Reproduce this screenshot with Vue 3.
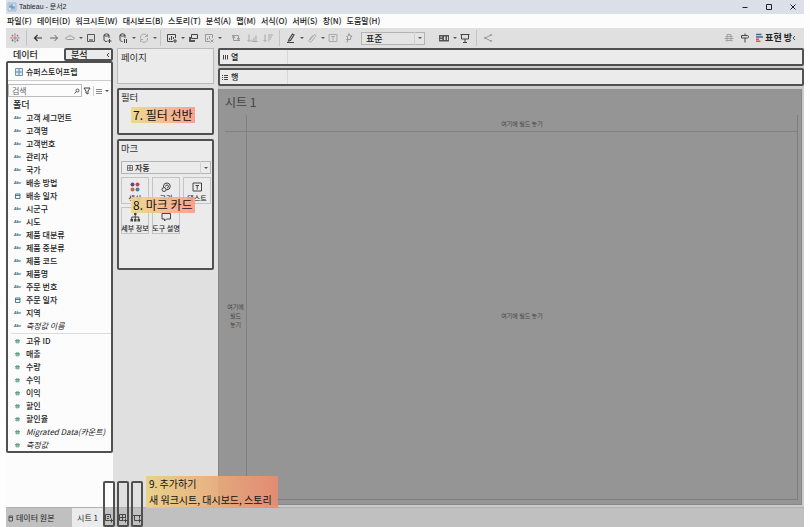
<script setup>
import { ref } from 'vue'

const menus = ['파일(F)', '데이터(D)', '워크시트(W)', '대시보드(B)', '스토리(T)', '분석(A)', '맵(M)', '서식(O)', '서버(S)', '창(N)', '도움말(H)']

const dark = '#444'
const pale = '#999'
const line = (d, stroke = dark, w = 1) => ({ d, stroke, fill: 'none', w })
const solid = (d, fill = dark) => ({ d, stroke: 'none', fill, w: 0 })

const caret = { kind: 'caret' }
const sep = { kind: 'sep' }
const space = { kind: 'space' }
const icon = (label, ...parts) => ({ kind: 'icon', label, parts })

const tools = [
  icon('시작 페이지', line('M6 4v4M4 6h4', '#d9773d'), line('M6 1.500v2M6 8.500v2M1.500 6h2M8.500 6h2', '#59879b'), line('M3.500 2.700v2M2.500 3.700h2M8.500 2.700v2M7.500 3.700h2', '#c27a8a'), line('M3.500 7.300v2M2.500 8.300h2M8.500 7.300v2M7.500 8.300h2', '#6f6f9e')),
  sep,
  icon('실행 취소', line('M10 6H2.5M5.5 3l-3 3 3 3', '#333', 1.2)),
  icon('다시 실행', line('M2 6h7.5M6.5 3l3 3-3 3', '#666')),
  icon('바꾸기', line('M3.5 7.500C1 7.500 1 5 3.5 5 4 3.500 8 3.500 8.5 5 11 5 11 7.500 8.5 7.500M3.5 7.500h5', '#999')),
  caret,
  icon('저장', line('M2.5 2.5h7v7h-7z', '#555'), solid('M4 7h4v2.5H4z', '#888')),
  icon('새 데이터 원본', line('M3 3v5c0 1 2 1.5 3 1.5M3 3c0-1.5 5-1.5 5 0S3 4.500 3 3M8 3v3M8.500 7v4M6.500 9h4')),
  icon('자동 업데이트', line('M3 3v5c0 1 1.500 1.500 2.500 1.500M3 3c0-1.500 5-1.500 5 0S3 4.500 3 3M8 3v3M7.500 7v4M9.500 7v4')),
  caret,
  icon('새로 고침', line('M2.500 6.500a3.500 3.500 0 0 1 6.500-2.500M9.500 2v2.500H7M9.500 6a3.500 3.500 0 0 1-6.500 2.500M2.500 10V7.500H5', '#aaa')),
  caret,
  sep,
  icon('새 워크시트', line('M7 9.500H1.500v-7h8V6M3.500 8V6M5.500 8V4M7.500 7V5M9 7v4M7 9h4')),
  caret,
  icon('복제', line('M4.500 2.500h6v4h-6z', '#444'), solid('M2 5h2v3h4v2H2z', '#555')),
  icon('시트 지우기', line('M7 9.500H2.500v-7h7V6M4.500 8V6M6.500 7V4M7.500 7.500l3 3M10.500 7.500l-3 3', '#999')),
  caret,
  space,
  icon('행과 열 바꾸기', line('M2 3.500h6.500v4M7 6l1.500 2L10 6M10 8.500H3.500v-4M2 6l1.500-2L5 6', pale)),
  icon('오름차순 정렬', line('M3 2.500v7M1.500 8L3 9.500 4.500 8M6 9V7.500M8 9V5.500M10 9V3.500M5.500 9.500h6', '#aaa')),
  icon('내림차순 정렬', line('M3 2.500v7M1.500 8L3 9.500 4.500 8M6 3h5M6 5h4M6 7h3M6 9h1.500', '#aaa')),
  sep,
  icon('하이라이트', line('M4 7.500L7.500 2l1.500 1-3.500 5.500-2 .500zM2 10.500h7', '#444', 1.200)),
  caret,
  icon('그룹', line('M4 8l4-5c1-1 2.500 0 1.500 1.500l-4 5c-1.500 1.500-3.500 0-2-2l3-4', '#aaa')),
  caret,
  icon('레이블 표시', line('M2 2.500h8v7H2zM4 4.500h4M6 4.500v4', '#aaa')),
  icon('고정', line('M6 1.500l1 2.500h2L7.500 6v1.500h-4L5 6 3.500 4.500 5 4zM5 7.500l-1 3', pale)),
]

const tools2 = [
  icon('카드 표시', solid('M1 3h10v6.500H1z', '#555'), solid('M2.200 4.500h2v1h-2zM2.200 7h2v1h-2zM6 4.500h1.500V8H6zM9 4.500h1V8H9z', '#ddd')),
  caret,
  icon('프레젠테이션', line('M1.500 2.500h9M2.500 2.500v4.500h7V2.500M6 7v3M4 10.500h4', '#444')),
  sep,
  icon('공유', line('M3 6l6-3M3 6l6 3M2.500 5.500h1v1h-1zM8.500 2.500h1v1h-1zM8.500 8.500h1v1h-1z', '#999')),
]

const tools3 = [
  icon('데이터 가이드', line('M2.500 4.500h7M1.500 6.500h9M2.500 8.500h7M4 2.500h4M4 2.500v7M8 2.500v7', '#a0a0a0')),
  icon('안내', line('M2.500 3.500h6l1.500 1.250-1.500 1.250h-6zM6 1.500v2M6 6v4.500', '#444')),
]

const dimensions = [
  ['고객 세그먼트', 'Abc'], ['고객명', 'Abc'], ['고객번호', 'Abc'], ['관리자', 'Abc'], ['국가', 'Abc'],
  ['배송 방법', 'Abc'], ['배송 일자', 'date'], ['시군구', 'Abc'], ['시도', 'Abc'], ['제품 대분류', 'Abc'],
  ['제품 중분류', 'Abc'], ['제품 코드', 'Abc'], ['제품명', 'Abc'], ['주문 번호', 'Abc'], ['주문 일자', 'date'],
  ['지역', 'Abc'], ['측정값 이름', 'Abc', true],
]
const measures = [
  ['고유 ID'], ['매출'], ['수량'], ['수익'], ['이익'], ['할인'], ['할인율'],
  ['Migrated Data(카운트)', true], ['측정값', true],
]

const marks = [
  { label: '색상', parts: [solid('M1.500 3.500a2 2 0 1 0 4 0 2 2 0 1 0-4 0', '#5a4a78'), solid('M6.500 3.500a2 2 0 1 0 4 0 2 2 0 1 0-4 0', '#c0445a'), solid('M1.500 8.500a2 2 0 1 0 4 0 2 2 0 1 0-4 0', '#c8674a'), solid('M6.500 8.500a2 2 0 1 0 4 0 2 2 0 1 0-4 0', '#4a7f96')] },
  { label: '크기', parts: [line('M3.500 6V5a3.400 3.400 0 1 1 3.400 3.800H6M2 8.500a2 2 0 1 0 4 0 2 2 0 1 0-4 0M5.500 5.500a1.500 1.500 0 1 1 1.500 1.500')] },
  { label: '텍스트', parts: [line('M2 2h8.500v8H2zM4.500 4.500h3.500M6.250 4.500v4')] },
  { label: '세부 정보', parts: [solid('M5 1.500h2.500v2.500H5zM1.500 8H4v2.500H1.500zM5 8h2.500v2.500H5zM8.500 8H11v2.500H8.500z'), line('M6.250 3v5M2.750 8V6h7v2')] },
  { label: '도구 설명', parts: [line('M2 2.500h8.500v5.500H6.500l-2 2V8H2z')] },
]

const newTabs = [
  { label: '새 워크시트', d: 'M6.500 8.500H2.500v-6h5V6M4 4.500h2M4 6.500h2M8.500 6.500v4M6.500 8.500h4' },
  { label: '새 대시보드', d: 'M6.500 8.500H2.500v-6h6V6M2.500 5.500h6M5.500 2.500v6M8.500 6.500v4M6.500 8.500h4' },
  { label: '새 스토리', d: 'M6.500 8.500H3.500v-5h5V6M2 3.500h2M8 3.500h2M8.500 6.500v4M6.500 8.500h4' },
]

const search = ref('')
const fit = ref('표준')
const markType = ref('자동')
</script>

<template>
  <div class="app">
    <header class="titlebar">
      <svg class="ic" viewBox="0 0 12 12"><path d="M2 2h8v8H2z" fill="#cfe0ee" stroke="#9db8cf" /><path d="M6 3v6M3 6h6M4 3.500v2M8 6.500v2" stroke="#4f87b0" fill="none" /></svg>
      <span class="title">Tableau - 문서2</span>
      <div class="wins">
        <button aria-label="최소화"><svg class="ic" viewBox="0 0 12 12"><path d="M3.500 6.500h5" stroke="#222" /></svg></button>
        <button aria-label="최대화"><svg class="ic" viewBox="0 0 12 12"><path d="M3.500 3.500h5v5h-5z" stroke="#222" fill="none" /></svg></button>
        <button aria-label="닫기"><svg class="ic" viewBox="0 0 12 12"><path d="M3.500 3.500l5 5M8.500 3.500l-5 5" stroke="#222" /></svg></button>
      </div>
    </header>

    <nav class="menubar">
      <button v-for="m in menus" :key="m">{{ m }}</button>
    </nav>

    <div class="toolbar">
      <template v-for="(t, i) in tools" :key="i">
        <button v-if="t.kind === 'icon'" class="tool" :aria-label="t.label">
          <svg class="ic" viewBox="0 0 12 12"><path v-for="(p, j) in t.parts" :key="j" :d="p.d" :fill="p.fill" :stroke="p.stroke" :stroke-width="p.w" /></svg>
        </button>
        <i v-else :class="t.kind"></i>
      </template>
      <div class="pick fit">
        <select v-model="fit" aria-label="맞춤">
          <option>표준</option>
        </select>
        <i class="caret"></i>
      </div>
      <template v-for="(t, i) in tools2" :key="'b' + i">
        <button v-if="t.kind === 'icon'" class="tool" :aria-label="t.label">
          <svg class="ic" viewBox="0 0 12 12"><path v-for="(p, j) in t.parts" :key="j" :d="p.d" :fill="p.fill" :stroke="p.stroke" :stroke-width="p.w" /></svg>
        </button>
        <i v-else :class="t.kind"></i>
      </template>
      <div class="right">
        <button v-for="t in tools3" :key="t.label" class="tool" :aria-label="t.label">
          <svg class="ic" viewBox="0 0 12 12"><path v-for="(p, j) in t.parts" :key="j" :d="p.d" :fill="p.fill" :stroke="p.stroke" :stroke-width="p.w" /></svg>
        </button>
        <button class="showme">
          <svg class="ic" viewBox="0 0 12 12"><path d="M3 2.500h5.500M3 5h7" stroke="#44658f" stroke-width="1.500" /><path d="M3 7.200h3M3 9.200h4.500" stroke="#d0564a" stroke-width="1.500" /></svg>
          표현 방<svg class="cut" viewBox="0 0 4 8"><path d="M3 2L1 4l2 2" stroke="#555" fill="none" /></svg>
        </button>
      </div>
    </div>

    <main class="body">
      <aside class="side">
        <div class="tabs">
          <button class="tab">데이터</button>
          <button class="tab analysis">분석<svg class="cut" viewBox="0 0 4 8"><path d="M3 2L1 4l2 2" stroke="#444" fill="none" /></svg></button>
        </div>
        <div class="pane">
          <button class="source">
            <svg class="ic" viewBox="0 0 12 12"><path d="M2.500 2.500h7v7h-7z" fill="#dfeaf2" stroke="#7396b0" /><path d="M6 2.500v7M2.500 6h7" stroke="#5d8aa8" /></svg>
            슈퍼스토어프렙
          </button>
          <div class="searchrow">
            <div class="box">
              <input v-model="search" type="text" placeholder="검색" aria-label="검색" />
              <svg class="mag" viewBox="0 0 8 8"><path d="M3 3.500a1.500 1.500 0 1 0 3 0 1.500 1.500 0 1 0-3 0M3.500 4.500L1.500 6.500" stroke="#555" fill="none" /></svg>
            </div>
            <button aria-label="필터"><svg class="ic sm" viewBox="0 0 10 10"><path d="M2 2h6L6 5v3L4 7V5z" stroke="#444" fill="none" /></svg></button>
            <button class="view" aria-label="보기"><svg class="ic sm" viewBox="0 0 10 10"><path d="M2 3.500h6M2 5.500h6M2 7.500h6" stroke="#888" /></svg><i class="caret"></i></button>
          </div>
          <h2 class="folder">폴더</h2>
          <ul>
            <li v-for="[name, type, it] in dimensions" :key="name">
              <span v-if="type === 'Abc'" class="abc">Abc</span>
              <svg v-else class="typ" viewBox="0 0 8 8"><path d="M1.500 2h4.500v4.500h-4.500zM1.500 3.500h4.500" stroke="#437a90" fill="none" /></svg>
              <span :class="{ it }">{{ name }}</span>
            </li>
          </ul>
          <ul class="measures">
            <li v-for="[name, it] in measures" :key="name">
              <svg class="typ" viewBox="0 0 8 8"><path d="M2.800 2v4.500M4.200 2v4.500M1 3.500h5M1 5h5" stroke="#4b9679" stroke-width=".800" /></svg>
              <span :class="{ it }">{{ name }}</span>
            </li>
          </ul>
        </div>
      </aside>

      <section class="cards">
        <div class="card pages"><h3>페이지</h3></div>
        <div class="card filters outlined">
          <h3>필터</h3>
          <p class="note">7. 필터 선반</p>
        </div>
        <div class="card marks outlined">
          <h3>마크</h3>
          <div class="pick marktype">
            <svg class="ic sm" viewBox="0 0 10 10"><path d="M2.500 2.500h5v5h-5zM5 2.500v5M2.500 5h5" stroke="#555" fill="none" stroke-width=".800" /></svg>
            <select v-model="markType" aria-label="마크 유형"><option>자동</option></select>
            <i class="caret"></i>
          </div>
          <div class="grid">
            <button v-for="m in marks" :key="m.label">
              <svg class="ic" viewBox="0 0 12 12"><path v-for="(p, j) in m.parts" :key="j" :d="p.d" :fill="p.fill" :stroke="p.stroke" :stroke-width="p.w" /></svg>
              <span>{{ m.label }}</span>
            </button>
          </div>
          <p class="note">8. 마크 카드</p>
        </div>
      </section>

      <section class="work">
        <div class="shelf outlined"><span class="name"><svg class="typ" viewBox="0 0 8 8"><path d="M2.500 2v4.500M4.500 2v4.500M6.500 2v4.500" stroke="#444" /></svg>열</span></div>
        <div class="shelf outlined"><span class="name"><svg class="typ" viewBox="0 0 8 8"><path d="M1 2.500h1M3 2.500h4M1 4.500h1M3 4.500h4M1 6.500h1M3 6.500h4" stroke="#444" /></svg>행</span></div>
        <div class="canvas">
          <h1>시트 1</h1>
          <div class="sheet">
            <div class="corner"></div>
            <div class="drop top">여기에 필드 놓기</div>
            <div class="drop left">여기에<br />필드<br />놓기</div>
            <div class="drop mid">여기에 필드 놓기</div>
          </div>
        </div>
      </section>
    </main>

    <footer class="sheets">
      <button class="src"><svg class="typ" viewBox="0 0 8 8"><path d="M2 2h3.500v5H2zM2 3.500h3.500" stroke="#555" fill="none" /></svg>데이터 원본</button>
      <button class="cur">시트 1</button>
      <div class="adds">
        <button v-for="n in newTabs" :key="n.label" class="add" :aria-label="n.label">
          <svg class="ic" viewBox="0 0 12 12"><path :d="n.d" stroke="#444" fill="none" /></svg>
        </button>
        <p class="note add-note">9. 추가하기<br />새 워크시트, 대시보드, 스토리</p>
      </div>
    </footer>
  </div>
</template>

<style>
body { margin: 0; background: #fdfdfd; }
</style>

<style scoped>
*, *::before, *::after { box-sizing: border-box; }
.app {
  display: flex; flex-direction: column; min-height: 100vh; padding: 0 6px;
  font-family: "Noto Sans CJK KR", sans-serif; font-size: 8px; line-height: 12px; color: #222;
  overflow: hidden;
}
button { font: inherit; color: inherit; background: none; border: 0; padding: 0; margin: 0; display: flex; align-items: center; white-space: nowrap; }
h1, h2, h3, p, ul { margin: 0; padding: 0; font-weight: 400; }
ul { list-style: none; }
.ic { width: 12px; height: 12px; flex: none; display: block; }
.ic.sm { width: 10px; height: 10px; }
.typ { width: 8px; height: 8px; flex: none; }
.cut { width: 4px; height: 8px; flex: none; }
.outlined { border: 2px solid #505050; border-radius: 2px; }

.titlebar { display: flex; align-items: center; height: 14px; background: #dbe0e8; }
.title { margin-left: 1px; font-family: "Liberation Sans", "Noto Sans CJK KR", sans-serif; font-size: 7px; }
.wins { margin-left: auto; display: flex; gap: 12px; padding-right: 5px; }

.menubar { display: flex; align-items: center; gap: 5px; height: 14px; padding-left: 1px; background: #fcfcfc; font-weight: 500; }

.toolbar { display: flex; align-items: center; height: 20px; padding: 0 8px 0 1px; background: #e0e0e0; }
.tool { width: 16px; height: 16px; flex: none; justify-content: center; }
.caret { width: 5px; flex: none; display: flex; justify-content: center; }
.caret::before { content: ""; border: 2px solid transparent; border-top-color: #555; border-bottom: 0; }
.sep { width: 7px; height: 16px; flex: none; display: flex; justify-content: center; }
.sep::before { content: ""; width: 1px; background: #c4c4c4; }
.space { width: 6px; flex: none; }
.pick { display: flex; align-items: center; position: relative; }
.pick select {
  appearance: none; width: 100%; height: 13px; font: inherit; font-weight: 500; line-height: 11px; color: #222;
  background: #ebebeb; border: 1px solid #b4b4b4; border-radius: 0;
}
.pick .caret { position: absolute; right: 0; width: 11px; height: 13px; align-items: center; border-left: 1px solid #d0d0d0; pointer-events: none; }
.fit { width: 64px; margin: 0 11px 0 4px; font-size: 9px; }
.fit select { padding: 0 4px; background: #e4e4e4; }
.right { margin-left: auto; display: flex; align-items: center; }
.showme { font-size: 9px; font-weight: 700; }

.body { flex: 1; display: flex; background: #e0e0e0; }
.side { width: 107px; flex: none; background: #fcfcfc; }
.tabs { display: flex; height: 13px; }
.tab { width: 58px; padding-left: 7px; font-size: 9px; font-weight: 500; }
.tab.analysis { flex: 1; width: auto; justify-content: space-between; padding: 0 1px 0 5px; background: #ebebeb; border: 2px solid #505050; border-radius: 2px; }
.pane { border: 2px solid #505050; border-radius: 2px; padding-top: 1px; height: 392px; }
.source { width: 100%; height: 17px; gap: 1px; padding-left: 5px; font-weight: 500; border-bottom: 1px solid #ccc; }
.searchrow { display: flex; align-items: center; height: 15px; margin-top: 2px; }
.box { display: flex; align-items: center; width: 74px; height: 13px; border: 1px solid #bbb; }
input { flex: 1; min-width: 0; border: 0; padding: 0 3px; background: none; font: inherit; height: 11px; }
input::placeholder { color: #666; opacity: 1; }
.mag { width: 8px; height: 8px; }
.view { border-left: 1px solid #ccc; margin-left: 1px; }
.folder { height: 13px; padding-left: 5px; font-size: 9px; line-height: 13px; font-weight: 500; }
li { display: flex; align-items: center; height: 13px; padding-left: 5px; line-height: 13px; font-weight: 500; white-space: nowrap; }
.abc { width: 13px; flex: none; font: italic 700 4px "Open Sans", sans-serif; color: #2f6a80; padding-left: 1px; }
li .typ { margin: 0 4px 0 1px; }
.it { font-style: italic; font-weight: 400; }
.measures { border-top: 1px solid #ddd; margin: 1px 0 0 3px; }
.measures li { padding-left: 2px; }

.cards { width: 105px; flex: none; padding: 0 4px; display: flex; flex-direction: column; gap: 4px; }
.card { position: relative; background: #ebebeb; }
.card h3 { padding: 1px 2px 0; line-height: 12px; color: #333; }
.pages { height: 36px; border: 1px solid #bbb; }
.pages h3 { padding: 2px 3px 0; }
.filters { height: 47px; }
.marks { height: 131px; }
.note { position: absolute; padding: 0 2px; font-size: 12px; line-height: 16px; color: #111; white-space: nowrap; background: linear-gradient(90deg, #ecd88ce8, #ff9a84e8); }
.filters .note { left: 12px; top: 17px; }
.marks .note { left: 12px; top: 56px; }
.marktype { margin: 7px 1px 0 2px; }
.marktype svg { position: absolute; left: 4px; }
.marktype select { padding: 0 13px; }
.grid { display: grid; grid-template-columns: repeat(3, 28px); justify-content: space-between; row-gap: 3px; padding: 3px 1px 0 2px; }
.grid button { flex-direction: column; height: 27px; padding-top: 3px; border: 1px solid #c4c4c4; font-size: 7px; line-height: 11px; font-weight: 500; }

.work { flex: 1; min-width: 0; display: flex; flex-direction: column; background: #cacaca; }
.shelf { height: 18px; background: #ebebeb; display: flex; margin-bottom: 2px; }
.name { width: 68px; display: flex; align-items: center; gap: 2px; padding-left: 1px; border-right: 1px solid #d8d8d8; font-weight: 500; }
.canvas { flex: 1; display: flex; flex-direction: column; margin: 1px 2px 2px 0; padding: 5px 3px 4px 6px; background: #959595; border: solid #868686; border-width: 0 1px 1px; }
.canvas h1 { height: 21px; font-size: 12px; line-height: 16px; color: #444; }
.sheet { flex: 1; display: grid; grid-template: 17px 1fr / 22px 1fr; border: solid #7d7d7d; border-width: 0 1px 1px 0; }
.corner, .top { border-bottom: 1px solid #808080; }
.corner, .left { border-right: 1px solid #808080; }
.drop { display: flex; align-items: center; justify-content: center; text-align: center; font-size: 6px; line-height: 9px; color: #444; white-space: nowrap; }

.sheets { display: flex; height: 20px; background: #c0c0c0; border-top: 1px solid #b0b0b0; }
.src { width: 66px; padding-left: 1px; gap: 1px; color: #222; }
.cur { width: 31px; justify-content: center; background: #ebebeb; }
.adds { position: relative; display: flex; gap: 2px; }
.add { position: relative; width: 12px; justify-content: center; }
.add::after { content: ""; position: absolute; left: 0; right: 0; bottom: 0; height: 46px; border: 2px solid #505050; border-radius: 2px; }
.add-note { left: 43px; bottom: 19px; width: 132px; padding: 0 3px; font-size: 10px; background: linear-gradient(90deg, #e9d083e8, #ea8a70e8); }
</style>
